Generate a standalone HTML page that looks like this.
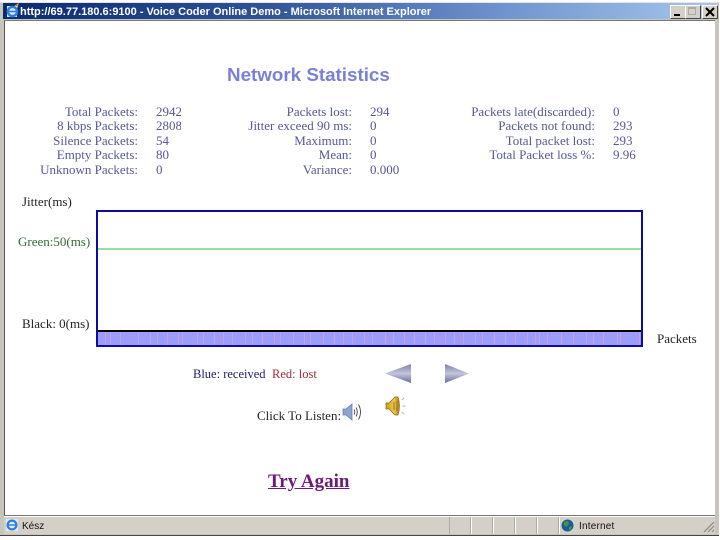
<!DOCTYPE html>
<html><head><meta charset="utf-8"><title>Voice Coder Online Demo</title>
<style>
html,body{margin:0;padding:0;background:#fff;width:720px;height:540px;overflow:hidden}
.a{position:absolute;white-space:nowrap}
.t{font:13px/14px "Liberation Serif",serif;color:#56569a}
.r{text-align:right}
.v{width:25px;overflow:hidden}
.btn{position:absolute;top:5px;width:14px;height:12px;background:#d4d0c8;border-top:1px solid #fff;border-left:1px solid #fff;border-right:1px solid #444;border-bottom:1px solid #444}
</style></head><body>
<div class="a" style="left:0;top:2px;width:719px;height:534px;background:#c8c5bd;border-top:1px solid #e6e4de;border-bottom:1px solid #444;box-sizing:border-box"></div>
<div class="a" style="left:3px;top:3px;width:713px;height:16px;background:linear-gradient(90deg,#0a2a72 0%,#2d5096 35%,#6f93cf 70%,#a6c6ec 100%)"></div>
<svg class="a" style="left:5px;top:3px" width="15" height="15" viewBox="0 0 15 15"><path d="M2 3h10v11H2z" fill="#dce8f8"/><circle cx="7.5" cy="8.5" r="4.6" fill="none" stroke="#2f7fd8" stroke-width="2.4"/><path d="M3 8.5h9" stroke="#2f7fd8" stroke-width="1.6"/><path d="M10 3l3-2-1 4" stroke="#e0b040" fill="none"/></svg>
<div class="a" style="left:20px;top:5px;font:bold 11px/14px 'Liberation Sans',sans-serif;color:#fff">http://69.77.180.6:9100 - Voice Coder Online Demo - Microsoft Internet Explorer</div>
<div class="btn" style="left:670px"><div class="a" style="left:3px;top:8px;width:6px;height:2px;background:#000"></div></div>
<div class="btn" style="left:685px"><div class="a" style="left:2px;top:1px;width:8px;height:8px;border:1px solid #aaa;border-top-width:2px;box-sizing:border-box"></div></div>
<div class="btn" style="left:702px"><svg class="a" style="left:2px;top:1px" width="10" height="10" viewBox="0 0 10 10"><path d="M1 1L9 9M9 1L1 9" stroke="#000" stroke-width="2"/></svg></div>
<div class="a" style="left:4px;top:21px;width:711px;height:494px;background:#fff;border-left:1px solid #555;box-sizing:border-box"></div>
<div class="a" style="left:4px;top:20px;width:711px;height:1px;background:#777"></div>

<div class="a" style="left:227px;top:64px;font:bold 18.8px/22px 'Liberation Sans',sans-serif;color:#7b80d6">Network Statistics</div>

<div class="a t r" style="right:582px;top:105px">Total Packets:</div><div class="a t v" style="left:156px;top:105px">2942</div>
<div class="a t r" style="right:582px;top:119px">8 kbps Packets:</div><div class="a t v" style="left:156px;top:119px">2808</div>
<div class="a t r" style="right:582px;top:134px">Silence Packets:</div><div class="a t" style="left:156px;top:134px">54</div>
<div class="a t r" style="right:582px;top:148px">Empty Packets:</div><div class="a t" style="left:156px;top:148px">80</div>
<div class="a t r" style="right:582px;top:163px">Unknown Packets:</div><div class="a t" style="left:156px;top:163px">0</div>

<div class="a t r" style="right:368px;top:105px">Packets lost:</div><div class="a t" style="left:370px;top:105px">294</div>
<div class="a t r" style="right:368px;top:119px">Jitter exceed 90 ms:</div><div class="a t" style="left:370px;top:119px">0</div>
<div class="a t r" style="right:368px;top:134px">Maximum:</div><div class="a t" style="left:370px;top:134px">0</div>
<div class="a t r" style="right:368px;top:148px">Mean:</div><div class="a t" style="left:370px;top:148px">0</div>
<div class="a t r" style="right:368px;top:163px">Variance:</div><div class="a t" style="left:370px;top:163px">0.000</div>

<div class="a t r" style="right:125px;top:105px">Packets late(discarded):</div><div class="a t" style="left:613px;top:105px">0</div>
<div class="a t r" style="right:125px;top:119px">Packets not found:</div><div class="a t" style="left:613px;top:119px">293</div>
<div class="a t r" style="right:125px;top:134px">Total packet lost:</div><div class="a t" style="left:613px;top:134px">293</div>
<div class="a t r" style="right:125px;top:148px;height:11px;overflow:hidden">Total Packet loss %:</div><div class="a t" style="left:613px;top:148px;height:11px;overflow:hidden">9.96</div>

<div class="a t" style="left:22px;top:195px;color:#222">Jitter(ms)</div>
<div class="a t" style="left:18px;top:235px;color:#2e6e2e">Green:50(ms)</div>
<div class="a t" style="left:22px;top:317px;color:#222">Black: 0(ms)</div>
<div class="a t" style="left:657px;top:332px;color:#222">Packets</div>

<svg class="a" style="left:96px;top:210px" width="547" height="137" viewBox="0 0 547 137" shape-rendering="crispEdges">
<rect x="0" y="0" width="547" height="137" fill="#0c0ca0"/>
<rect x="2" y="2" width="543" height="133" fill="#fff"/>
<rect x="2" y="38" width="543" height="2" fill="#98e098"/>
<rect x="2" y="120" width="543" height="2" fill="#000"/>
<rect x="2" y="122" width="543" height="13" fill="#9c9cfa"/>
<g fill="#c8a0dc">
<rect x="9" y="122" width="1" height="13"/><rect x="14" y="122" width="1" height="13"/><rect x="24" y="122" width="1" height="13"/><rect x="42" y="122" width="1" height="13"/><rect x="54" y="122" width="1" height="13"/><rect x="61" y="122" width="1" height="13"/><rect x="71" y="122" width="1" height="13"/><rect x="82" y="122" width="1" height="13"/><rect x="86" y="122" width="1" height="13"/><rect x="101" y="122" width="1" height="13"/><rect x="107" y="122" width="1" height="13"/><rect x="118" y="122" width="1" height="13"/><rect x="127" y="122" width="1" height="13"/><rect x="136" y="122" width="1" height="13"/><rect x="149" y="122" width="1" height="13"/><rect x="156" y="122" width="1" height="13"/><rect x="166" y="122" width="1" height="13"/><rect x="178" y="122" width="1" height="13"/><rect x="184" y="122" width="1" height="13"/><rect x="197" y="122" width="1" height="13"/><rect x="208" y="122" width="1" height="13"/><rect x="214" y="122" width="1" height="13"/><rect x="227" y="122" width="1" height="13"/><rect x="238" y="122" width="1" height="13"/><rect x="247" y="122" width="1" height="13"/><rect x="256" y="122" width="1" height="13"/><rect x="268" y="122" width="1" height="13"/><rect x="276" y="122" width="1" height="13"/><rect x="289" y="122" width="1" height="13"/><rect x="297" y="122" width="1" height="13"/><rect x="308" y="122" width="1" height="13"/><rect x="318" y="122" width="1" height="13"/><rect x="329" y="122" width="1" height="13"/><rect x="338" y="122" width="1" height="13"/><rect x="349" y="122" width="1" height="13"/><rect x="358" y="122" width="1" height="13"/><rect x="367" y="122" width="1" height="13"/><rect x="379" y="122" width="1" height="13"/><rect x="386" y="122" width="1" height="13"/><rect x="398" y="122" width="1" height="13"/><rect x="409" y="122" width="1" height="13"/><rect x="419" y="122" width="1" height="13"/><rect x="431" y="122" width="1" height="13"/><rect x="439" y="122" width="1" height="13"/><rect x="443" y="122" width="1" height="13"/><rect x="451" y="122" width="1" height="13"/><rect x="465" y="122" width="1" height="13"/><rect x="477" y="122" width="1" height="13"/><rect x="490" y="122" width="1" height="13"/><rect x="497" y="122" width="1" height="13"/><rect x="507" y="122" width="1" height="13"/><rect x="521" y="122" width="1" height="13"/><rect x="524" y="122" width="1" height="13"/><rect x="543" y="122" width="1" height="13"/>
</g></svg>

<div class="a t" style="left:193px;top:367px;color:#1c1c70;font-size:12.5px">Blue: received</div>
<div class="a t" style="left:272px;top:367px;color:#a02c38;font-size:12.5px">Red: lost</div>

<svg class="a" style="left:384px;top:363px" width="87" height="21" viewBox="0 0 87 21">
<defs><linearGradient id="g" x1="0" y1="0" x2="0" y2="1"><stop offset="0" stop-color="#7e80a6"/><stop offset=".5" stop-color="#c4c5dc"/><stop offset="1" stop-color="#6c6e96"/></linearGradient>
<linearGradient id="y" x1="0" y1="0" x2="1" y2="0"><stop offset="0" stop-color="#c89a20"/><stop offset=".6" stop-color="#f0c850"/><stop offset="1" stop-color="#a87c14"/></linearGradient></defs>
<path d="M1 10.5L27 1V20Z" fill="url(#g)"/><path d="M61 1L85 10.5L61 20Z" fill="url(#g)"/>
</svg>

<div class="a t" style="left:257px;top:409px;color:#222">Click To Listen:</div>
<svg class="a" style="left:342px;top:402px" width="20" height="20" viewBox="0 0 20 20">
<path d="M1 7H4L10 2V18L4 13H1Z" fill="#8fa3d0" stroke="#6a7ca8" stroke-width=".8"/>
<path d="M12 7.5q1.6 2.5 0 5M14 5.5q2.6 4.500 0 9M16.500 2.500q4 7.500 0 15" fill="none" stroke="#444" stroke-width=".9"/>
</svg>
<svg class="a" style="left:385px;top:395px" width="24" height="22" viewBox="0 0 24 22">
<path d="M1 8H4L10 2H13Q16 10.500 13 20H10L4 14H1Z" fill="url(#y)" stroke="#8a6a10" stroke-width=".7"/>
<path d="M9 7V15M12 6V16" stroke="#9a7414"/>
<path d="M17 5l2-2M17.500 11h3M17 17l2 2" stroke="#b0b0b0"/>
</svg>

<div class="a" style="left:268px;top:472px;font:bold 19px/20px 'Liberation Serif',serif;color:#6a1a78;text-decoration:underline">Try Again</div>

<div class="a" style="left:4px;top:515px;width:711px;height:1px;background:#777"></div>
<div class="a" style="left:4px;top:516px;width:711px;height:1px;background:#fff"></div>
<div class="a" style="left:4px;top:517px;width:711px;height:17px;background:#d4d0c8"></div>
<svg class="a" style="left:5px;top:518px" width="14" height="14" viewBox="0 0 14 14"><rect x="1" y="1" width="12" height="12" fill="#dfe8f4"/><circle cx="7" cy="7" r="4.4" fill="none" stroke="#2f7fd8" stroke-width="2.2"/><path d="M3 7h8" stroke="#2f7fd8" stroke-width="1.4"/></svg>
<div class="a" style="left:22px;top:520px;font:10px/13px 'Liberation Sans',sans-serif;color:#111">Kész</div>
<div class="a" style="left:449px;top:517px;height:17px;width:1px;background:#aaa"></div>
<div class="a" style="left:470px;top:517px;height:17px;width:1px;background:#aaa"></div><div class="a" style="left:471px;top:517px;height:17px;width:1px;background:#fff"></div>
<div class="a" style="left:492px;top:517px;height:17px;width:1px;background:#aaa"></div><div class="a" style="left:493px;top:517px;height:17px;width:1px;background:#fff"></div>
<div class="a" style="left:514px;top:517px;height:17px;width:1px;background:#aaa"></div><div class="a" style="left:515px;top:517px;height:17px;width:1px;background:#fff"></div>
<div class="a" style="left:536px;top:517px;height:17px;width:1px;background:#aaa"></div><div class="a" style="left:537px;top:517px;height:17px;width:1px;background:#fff"></div>
<div class="a" style="left:558px;top:517px;height:17px;width:1px;background:#aaa"></div><div class="a" style="left:559px;top:517px;height:17px;width:1px;background:#fff"></div>
<svg class="a" style="left:561px;top:519px" width="13" height="13" viewBox="0 0 13 13"><circle cx="6.5" cy="6.5" r="6" fill="#1c5a9c"/><path d="M3 3l4-1 1 3-3 3-2-2zM8 8l3-1-1 4-2 0z" fill="#3c9a3c"/></svg>
<div class="a" style="left:579px;top:520px;font:10px/13px 'Liberation Sans',sans-serif;color:#111;letter-spacing:.2px">Internet</div>
<svg class="a" style="left:703px;top:520px" width="12" height="13" viewBox="0 0 12 13"><path d="M11 2L1 12M11 6L5 12M11 10L9 12" stroke="#8a8a82" stroke-width="1.2"/></svg>
<div class="a" style="left:0;top:536px;width:720px;height:4px;background:#fff"></div>
</body></html>
